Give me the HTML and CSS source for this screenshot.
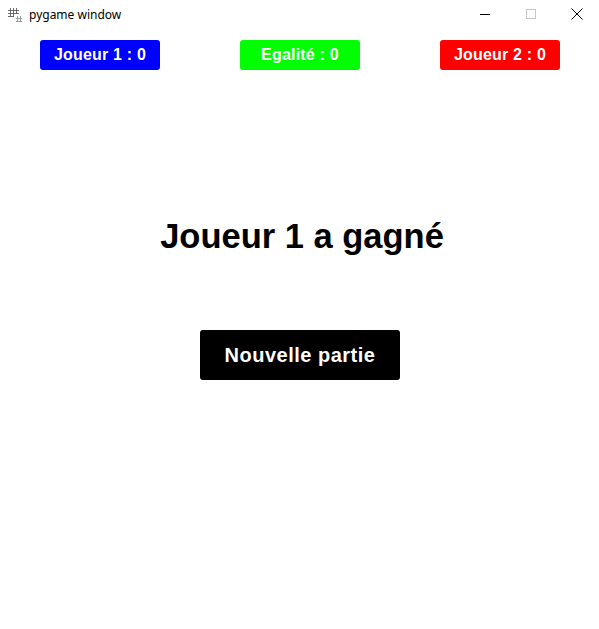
FILE: index.html
```html
<!DOCTYPE html>
<html lang="fr">
<head>
<meta charset="utf-8">
<title>pygame window</title>
<link rel="stylesheet" href="styles.css">
</head>
<body>
<div class="titlebar">
  <svg class="app-icon" width="16" height="16" viewBox="0 0 16 16">
    <g stroke="#6a6a6a" stroke-width="1" fill="none">
      <path d="M3.5 1v9M6.5 1v9M9.5 1v6M1 3.5h11M1 6.5h11M1 9.5h6"/>
    </g>
    <g stroke="#9a9a9a" stroke-width="1" fill="none">
      <path d="M10.5 9v5M13.5 9v5M9 11.5h6M9 14.5h6"/>
    </g>
  </svg>
  <span class="title">pygame window</span>
  <div class="controls">
    <span class="ctl ctl-min"><svg width="12" height="12" viewBox="0 0 12 12"><path d="M1 6.5h10" stroke="#000" stroke-width="1"/></svg></span>
    <span class="ctl ctl-max"><svg width="12" height="12" viewBox="0 0 12 12"><rect x="1.5" y="1.5" width="9" height="9" stroke="#c8c8c8" fill="none"/></svg></span>
    <span class="ctl ctl-close"><svg width="12" height="12" viewBox="0 0 12 12"><path d="M0.5 0.5l11 11M11.5 0.5l-11 11" stroke="#000" stroke-width="1"/></svg></span>
  </div>
</div>
<main class="game">
  <div class="scores">
    <div class="score score-p1">Joueur 1 : 0</div>
    <div class="score score-draw">Egalité : 0</div>
    <div class="score score-p2">Joueur 2 : 0</div>
  </div>
  <h1 class="result">Joueur 1 a gagné</h1>
  <div class="actions">
    <button class="new-game">Nouvelle partie</button>
  </div>
</main>
</body>
</html>
```

FILE: styles.css
```css
html, body {
  margin: 0;
  padding: 0;
  background: #fff;
}
body {
  width: 599px;
  height: 629px;
  overflow: hidden;
  font-family: "Liberation Sans", Arial, sans-serif;
}
.titlebar {
  height: 30px;
  display: flex;
  align-items: center;
  position: relative;
}
.app-icon {
  margin-left: 7px;
  margin-top: -1px;
}
.title {
  margin-left: 6px;
  font-family: "Noto Sans", "Open Sans", sans-serif;
  font-size: 12px;
  color: #000;
  margin-top: -1px;
}
.controls {
  margin-left: auto;
  display: flex;
  height: 30px;
}
.ctl {
  width: 46px;
  display: flex;
  align-items: center;
  justify-content: center;
  margin-top: -2px;
}
.ctl-close { width: 45px; }
.game {
  height: 599px;
}
.scores {
  display: flex;
  gap: 80px;
  padding: 10px 0 0 40px;
}
.score {
  width: 120px;
  height: 30px;
  border-radius: 3px;
  color: #fff;
  font-weight: bold;
  font-size: 16px;
  display: flex;
  align-items: center;
  justify-content: center;
  letter-spacing: 0.2px;
}
.score-p1 { background: #0000ff; }
.score-draw { background: #00ff00; }
.score-p2 { background: #ff0000; }
.result {
  margin: 146px 0 0;
  font-size: 34.5px;
  line-height: 40px;
  font-weight: bold;
  text-align: center;
  color: #000;
  padding-left: 5px;
}
.actions {
  display: flex;
  justify-content: center;
  margin-top: 74px;
}
.new-game {
  width: 200px;
  height: 50px;
  border: none;
  border-radius: 3px;
  background: #000;
  color: #fff;
  font-family: "Liberation Sans", Arial, sans-serif;
  font-weight: bold;
  font-size: 20px;
  padding: 0;
  margin-left: 1px;
  letter-spacing: 0.5px;
}
```
